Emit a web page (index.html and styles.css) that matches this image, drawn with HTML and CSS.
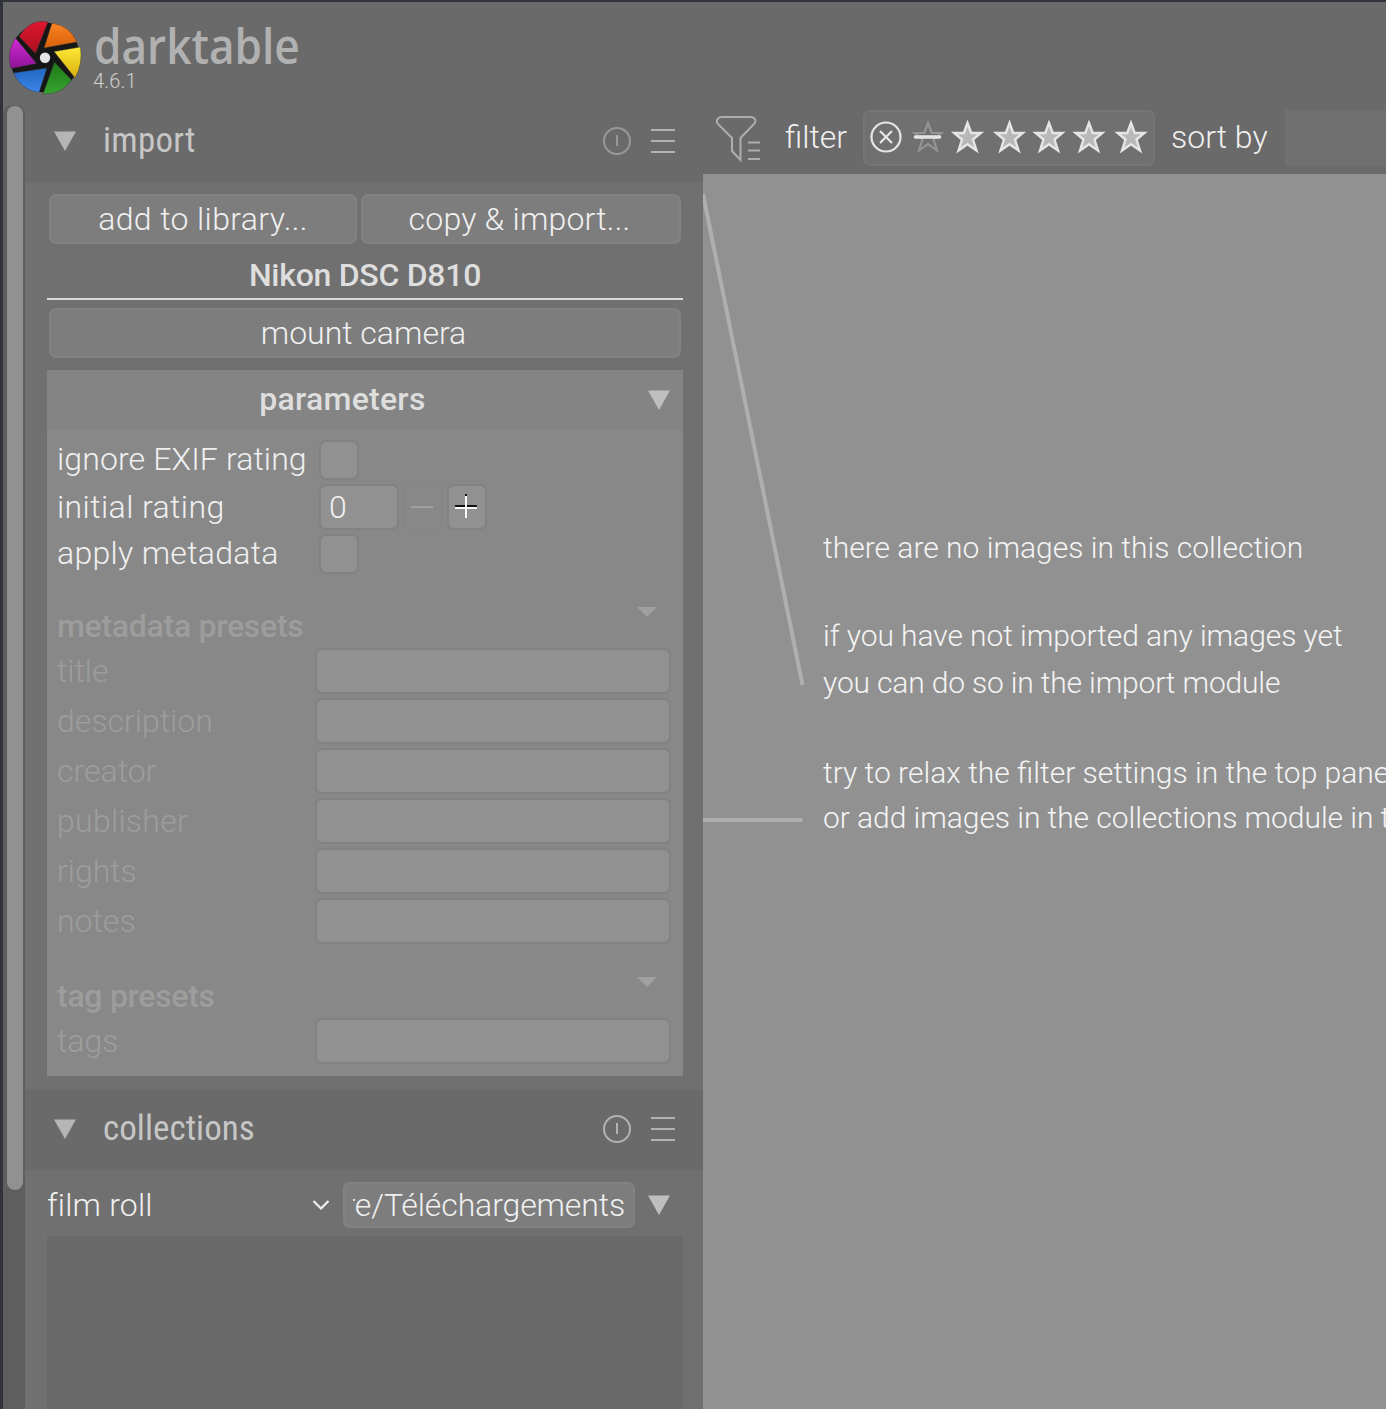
FILE: index.html
```html
<!DOCTYPE html>
<html lang="en">
<head>
<meta charset="utf-8">
<title>darktable</title>
<link rel="stylesheet" href="styles.css">
</head>
<body>
<svg class="defs" width="0" height="0">
  <defs>
    <path id="star" d="M0-13.500 3.700-3.500 13.300-3.500 5.500 3 9 14 0 7.700-9 14-5.500 3-13.300-3.500-3.700-3.500Z"/>
    <linearGradient id="red" x2="0" y2="1"><stop stop-color="#e01830"/><stop offset="1" stop-color="#a81020"/></linearGradient>
    <linearGradient id="orange" x2="0" y2="1"><stop stop-color="#fb8422"/><stop offset="1" stop-color="#d8610c"/></linearGradient>
    <linearGradient id="yellow" x2="0" y2="1"><stop stop-color="#ffea35"/><stop offset="1" stop-color="#d9b010"/></linearGradient>
    <linearGradient id="green" x2="0" y2="1"><stop stop-color="#1d7719"/><stop offset="1" stop-color="#36a52f"/></linearGradient>
    <linearGradient id="blue" x2="0" y2="1"><stop stop-color="#2167c2"/><stop offset="1" stop-color="#3d86e8"/></linearGradient>
    <linearGradient id="purple" x2="0" y2="1"><stop stop-color="#d32bd8"/><stop offset="1" stop-color="#8d1495"/></linearGradient>
  </defs>
</svg>
<div class="window">
  <header class="brand">
    <svg class="logo" width="76" height="76" viewBox="7 20 76 76">
      <circle cx="45" cy="57.500" r="35" fill="#161616"/>
      <g stroke="#3339" stroke-width=".7">
      <path fill="url(#red)" d="M19 36.500 35.500 53.500 48 22Q31 18 19 36.500Z"/>
      <path fill="url(#orange)" d="M52 23 44 48 77 42Q70 26 52 23Z"/>
      <path fill="url(#yellow)" d="M54 51.500 80.500 47Q83 64 75 78Z"/>
      <path fill="url(#green)" d="M54.500 62 71.500 80Q61 95 43 94Z"/>
      <path fill="url(#blue)" d="M47 68 13.500 73Q21 90 39 92.500Z"/>
      <path fill="url(#purple)" d="M36.500 63.500 15.500 38Q6 53 11 68.500Z"/>
      </g>
      <circle cx="45" cy="57.700" r="5.200" fill="#e6e6e6"/>
    </svg>
    <div class="brand-text"><div class="name">darktable</div><div class="version">4.6.1</div></div>
  </header>
  <div class="work">
    <aside class="left">
      <div class="scroll"><div class="slider"></div></div>
      <div class="modules">
        <section>
          <div class="module-head">
            <svg width="24" height="22" viewBox="0 0 24 22"><path class="tri" d="M1 1.500H23L12 21Z"/></svg>
            <h2 class="t-import">import</h2>
            <svg class="dim" width="30" height="30" viewBox="0 0 30 30"><circle cx="15" cy="15" r="13"/><path d="M15 9V20"/></svg>
            <svg class="menu" width="26" height="28" viewBox="0 0 26 28"><path d="M1 3H25M1 14H25M1 25H25"/></svg>
          </div>
          <div class="import">
            <div class="buttons"><button class="add">add to library...</button><button class="copy">copy &amp; import...</button></div>
            <div class="camera">Nikon DSC D810</div>
            <button class="mount">mount camera</button>
            <div class="params-head"><b>parameters</b><svg width="24" height="22" viewBox="0 0 24 22"><path class="tri bright" d="M1 1.500H23L12 21Z"/></svg></div>
            <div class="params">
              <div class="row r1"><label class="t1">ignore EXIF rating</label><i class="check"></i></div>
              <div class="row r2"><label class="t2">initial rating</label><i class="number">0</i><i class="step off"><svg width="24" height="24"><path d="M0 12H22"/></svg></i><i class="step"><svg width="24" height="26"><path class="shade" d="M0 12H22M11 0V3"/><path d="M0 14H22M11 2V24"/></svg></i></div>
              <div class="row r3"><label class="t3">apply metadata</label><i class="check"></i></div>
              <div class="preset"><b>metadata presets</b><svg width="20" height="10"><path d="M0 0H20L10 10Z"/></svg></div>
              <div class="row field"><label>title</label><i class="entry"></i></div>
              <div class="row field"><label>description</label><i class="entry"></i></div>
              <div class="row field"><label>creator</label><i class="entry"></i></div>
              <div class="row field"><label class="t-pub">publisher</label><i class="entry"></i></div>
              <div class="row field"><label>rights</label><i class="entry"></i></div>
              <div class="row field"><label>notes</label><i class="entry"></i></div>
              <div class="preset tagset"><b>tag presets</b><svg width="20" height="10"><path d="M0 0H20L10 10Z"/></svg></div>
              <div class="row field"><label>tags</label><i class="entry"></i></div>
            </div>
          </div>
        </section>
        <section class="collections">
          <div class="module-head">
            <svg width="24" height="22" viewBox="0 0 24 22"><path class="tri" d="M1 1.500H23L12 21Z"/></svg>
            <h2>collections</h2>
            <svg width="30" height="30" viewBox="0 0 30 30"><circle cx="15" cy="15" r="13"/><path d="M15 9V20"/></svg>
            <svg class="menu" width="26" height="28" viewBox="0 0 26 28"><path d="M1 3H25M1 14H25M1 25H25"/></svg>
          </div>
          <div class="rule">
            <span class="roll">film roll</span>
            <svg class="chev" width="18" height="12"><path d="M1.500 2 9 9.500 16.500 2"/></svg>
            <div class="path"><span>re/Téléchargements</span></div>
            <svg width="24" height="22" viewBox="0 0 24 22"><path class="tri bright" d="M1 1.500H23L12 21Z"/></svg>
          </div>
          <div class="list"></div>
        </section>
      </div>
    </aside>
    <main>
      <div class="toolbar">
        <svg class="funnel" width="48" height="48" viewBox="715 113 48 48"><path d="M722 116H750C756 116 757 121 753 124L740.500 137V159L732 150V137L719 124C715 121 717 116 722 116ZM748 141.500H760M748 149.500H760M748 158H760"/></svg>
        <span class="filter">filter</span>
        <div class="stars">
          <svg width="288" height="52" viewBox="865 112 288 52">
            <circle cx="886" cy="137" r="14.500"/><path class="cross" d="M880 131 892 143M892 131 880 143"/>
            <use class="none" href="#star" x="928" y="136.500"/>
            <path class="bar" d="M915.500 137H939.500"/>
            <g class="on">
              <use href="#star" x="967.500" y="136.500"/>
              <use href="#star" x="1009.500" y="136.500"/>
              <use href="#star" x="1049" y="136.500"/>
              <use href="#star" x="1089" y="136.500"/>
              <use href="#star" x="1131" y="136.500"/>
            </g>
          </svg>
        </div>
        <span class="sort">sort by</span>
        <div class="sortbox"></div>
      </div>
      <div class="canvas">
        <svg class="hints" width="101" height="660"><path d="M0 20 99.500 511M0 646H99.500"/></svg>
        <div class="message">
          <p class="m1">there are no images in this collection</p>
          <p class="m2">if you have not imported any images yet</p>
          <p class="m3">you can do so in the import module</p>
          <p class="m4">try to relax the filter settings in the top panel</p>
          <p class="m5">or add images in the collections module in the left panel</p>
        </div>
      </div>
    </main>
  </div>
</div>
</body>
</html>
```
FILE: styles.css
```css
* { box-sizing: border-box; }
body { margin: 0; width: 1386px; height: 1409px; overflow: hidden; background: #30343a; font: 300 32px/46px Roboto, sans-serif; color: #f0f0f0; }
svg { display: block; flex: none; fill: none; }
.defs { position: absolute; }
i { font-style: normal; }
button, .path { font: inherit; color: inherit; background: #7d7d7d; border: 2px solid #828282; border-radius: 7px; padding: 0; white-space: nowrap; }
.window { margin: 2px 0 0 3px; height: 1407px; background: #6a6a6a; display: flex; flex-direction: column; }
.brand { height: 99px; flex: none; display: flex; padding: 18px 0 0 4px; }
.brand-text { padding-left: 10px; }
.name { font: 650 48px/52px "Open Sans", sans-serif; color: #b1b1b1; transform: scaleX(.92); transform-origin: 0 0; margin-left: 1px; }
.version { font-size: 20px; line-height: 24px; margin-top: -3px; letter-spacing: .2px; color: #cfcfcf; }
.work { flex: 1; display: flex; min-height: 0; }
.left { width: 700px; flex: none; display: flex; }
.scroll { width: 22px; flex: none; background: #5e5e5e; padding: 1px 2px 0 4px; margin-top: 4px; border-radius: 9px 9px 0 0; }
.slider { width: 16px; height: 1084px; border-radius: 8px; background: #919191; }
.modules { flex: 1; background: #707070; }
.module-head { height: 81px; display: flex; align-items: center; background: #6a6a6a; padding: 0 27px 2px 28px; }
.module-head h2 { font: 400 35px/46px "Roboto Condensed", Roboto, sans-serif; margin: 0 auto 0 26px; color: #c6c6c6; letter-spacing: .05px; }
.module-head .t-import { letter-spacing: .25px; }
.module-head svg { stroke: #b2b2b2; stroke-width: 2; }
.module-head .dim { stroke: #989898; }
.module-head .menu { margin-left: 18px; }
.tri, .module-head .tri { fill: #b5b5b5; stroke: none; }
.tri.bright { fill: #bfbfbf; }
.import { padding: 12px 20px 14px 22px; height: 908px; }
.buttons { display: flex; gap: 4px; padding: 0 2px; }
.buttons button { height: 50px; }
.add { width: 308px; letter-spacing: .38px; }
.copy { width: 320px; letter-spacing: .2px; padding-right: 3px; }
.camera { height: 56px; text-align: center; font-weight: 500; letter-spacing: -.28px; color: #dedede; border-bottom: 2px solid #dadada; padding-top: 8px; }
.mount { display: block; width: 632px; height: 50px; margin: 8px 2px 12px; padding-right: 3px; }
.params-head { display: flex; align-items: center; height: 60px; background: #848484; padding: 0 12px 0 0; }
.params-head b { flex: 1; text-align: center; font-weight: 500; color: #dedede; padding: 0 9px 2px 0; letter-spacing: .25px; }
.params { background: #888; height: 646px; padding: 6px 10px 0; }
.row { display: flex; align-items: center; }
.row label { width: 262px; white-space: nowrap; }
.r1 { height: 48px; }
.r2 { height: 46px; }
.r3 { height: 48px; }
.r1 label, .r3 label { padding-bottom: 2px; }
.t1 { letter-spacing: .12px; }
.t2 { letter-spacing: .42px; }
.t3 { letter-spacing: .3px; }
.t-pub { letter-spacing: .28px; }
.check { width: 40px; height: 40px; }
.check, .number, .step, .entry { background: #919191; border: 2px solid #828282; border-radius: 7px; }
.number { width: 80px; height: 46px; padding-left: 8px; line-height: 42px; margin-right: 4px; }
.step { width: 40px; height: 46px; margin-right: 4px; display: flex; align-items: center; justify-content: center; }
.step svg { stroke: #fafafa; stroke-width: 2; }
.step .shade { stroke: #111; }
.step.off { background: #888; border-color: #868686; }
.step.off svg { stroke: #a0a0a0; }
.preset { height: 68px; display: flex; justify-content: space-between; padding: 29px 16px 0 0; color: #9d9d9d; }
.preset svg { fill: #a0a0a0; }
.preset b { font-weight: 500; letter-spacing: -.28px; margin-top: -4px; }
.tagset { height: 70px; padding-top: 31px; }
.field { height: 50px; color: #9d9d9d; }
.field label { width: 258px; }
.entry { width: 356px; height: 46px; }
.collections .module-head { height: 80px; }
.rule { height: 66px; display: flex; align-items: center; padding: 4px 32px 0 22px; }
.roll { flex: 1; letter-spacing: .2px; }
.chev { stroke: #f0f0f0; stroke-width: 2.200; margin-right: 13px; }
.path { width: 292px; height: 46px; line-height: 42px; padding: 0 8px; letter-spacing: -.12px; }
.path span { display: flex; justify-content: flex-end; overflow: hidden; }
.rule .path + svg { margin-left: 12px; }
.list { margin: 0 20px 0 22px; height: 180px; background: #696969; }
main { flex: 1; display: flex; flex-direction: column; min-width: 0; }
.toolbar { height: 73px; flex: none; display: flex; align-items: center; white-space: nowrap; overflow: hidden; }
.funnel { margin-left: 12px; stroke: #aeaeae; stroke-width: 2; }
.filter, .sort { padding-bottom: 2px; }
.filter { width: 78px; margin-left: 22px; }
.stars { width: 292px; height: 56px; background: #707070; border: 2px solid #757575; border-radius: 7px; }
.stars svg { stroke: #e6e6e6; stroke-width: 2.200; }
.stars .none { stroke: #939393; }
.stars .bar { stroke-width: 3.600; stroke-linecap: round; }
.stars .on { fill: #b8b8b8; stroke-width: 2.400; }
.sort { width: 114px; margin-left: 16px; }
.sortbox { flex: 1; height: 56px; background: #707070; }
.canvas { flex: 1; display: flex; background: #919191; overflow: hidden; }
.hints { stroke: #afafaf; stroke-width: 4; }
.message { padding: 351px 0 0 19px; white-space: nowrap; font-size: 30px; color: #f4f4f4; }
.message p { margin: 0; height: 46px; }
.message .m1 { height: 88px; }
.message .m2 { height: 47px; letter-spacing: -.08px; }
.message .m3 { height: 90px; letter-spacing: -.17px; }
.message .m4 { height: 45px; }
.message .m5 { letter-spacing: -.06px; }
```
